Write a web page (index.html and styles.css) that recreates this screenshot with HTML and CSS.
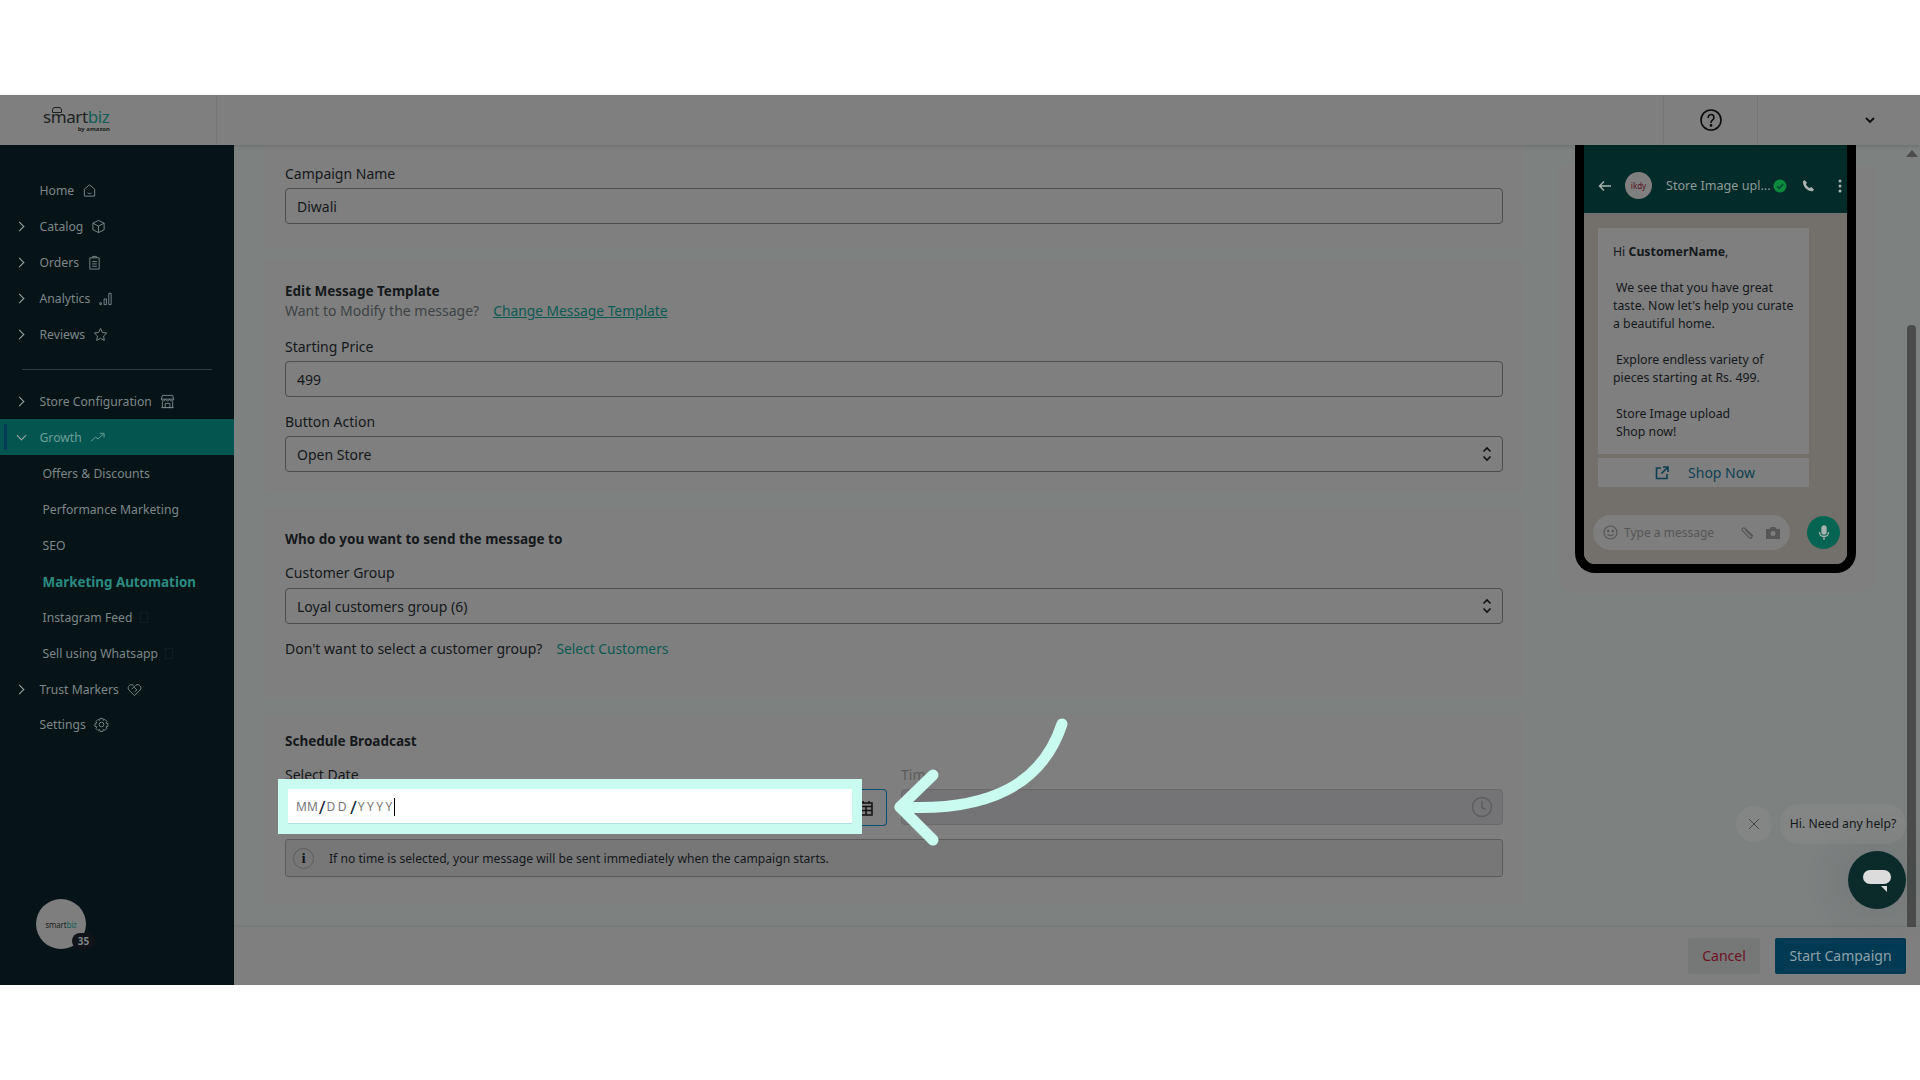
FILE: index.html
```html
<!DOCTYPE html>
<html>
<head lang="en">
    <meta charset="UTF-8">
    <title>Marketing Automation</title>
    <link rel="stylesheet" href="styles.css">
</head>
<body>
<div class="wrap">
    <header class="topbar">
        <div class="brand">
            <div class="logo"><span class="logo-mark"></span>smart<span class="logo-biz">biz</span><small>by amazon</small></div>
        </div>
        <div class="topbar-space"></div>
        <div class="topbar-help">
            <svg width="24" height="24" viewBox="0 0 24 24" fill="none" stroke="#0c0c0c" stroke-width="1.6"><circle cx="12" cy="12" r="10"/><path d="M9.2 9.4a2.9 2.9 0 1 1 4.5 2.4c-1.1.7-1.7 1.3-1.7 2.6" stroke-linecap="round"/><circle cx="12" cy="17.4" r=".6" fill="#0c0c0c"/></svg>
        </div>
        <div class="topbar-user">
            <svg width="12" height="8" viewBox="0 0 12 8" fill="none" stroke="#0c0c0c" stroke-width="1.8"><path d="M2 2l4 4 4-4"/></svg>
        </div>
    </header>

    <div class="main">
        <nav class="sidebar">
            <div class="nav-item"><span class="nav-text">Home</span>
                <svg class="nav-icon" viewBox="0 0 16 16"><path d="M2.500 6.500L8 2l5.500 4.500V14h-11zM6 10.500c1 1 3 1 4 0"/></svg></div>
            <div class="nav-item has-arrow"><span class="nav-text">Catalog</span>
                <svg class="nav-icon" viewBox="0 0 16 16"><path d="M8 1.500l6 3v7l-6 3-6-3v-7zM2 4.500l6 3 6-3M8 7.500v7"/></svg></div>
            <div class="nav-item has-arrow"><span class="nav-text">Orders</span>
                <svg class="nav-icon" viewBox="0 0 16 16"><path d="M3 3h10v12H3zM6 3V1.500h4V3M5.500 7h5M5.500 9.500h5M5.500 12h5"/></svg></div>
            <div class="nav-item has-arrow"><span class="nav-text">Analytics</span>
                <svg class="nav-icon" viewBox="0 0 16 16"><path d="M2 12.500h1.500v2H2zM6.500 8.500h2.500v6H6.500zM11.500 2.500H14v12h-2.500z"/></svg></div>
            <div class="nav-item has-arrow"><span class="nav-text">Reviews</span>
                <svg class="nav-icon" viewBox="0 0 16 16"><path d="M8 1.500l2 4.300 4.700.6-3.500 3.200.9 4.700L8 12l-4.100 2.300.9-4.700L1.300 6.400 6 5.800z"/></svg></div>
            <div class="nav-line"></div>
            <div class="nav-item has-arrow"><span class="nav-text">Store Configuration</span>
                <svg class="nav-icon" viewBox="0 0 16 16"><path d="M2.500 1.500h11l1 4h-13zM1.500 5.500c0 2.500 4 2.500 4.300 0 .3 2.500 4.100 2.500 4.400 0 .3 2.500 4.300 2.500 4.300 0M2.500 8v6.500h11V8M5.500 14.500V10h5v4.500M1.500 14.500h13"/></svg></div>
            <div class="nav-item has-arrow open active"><span class="nav-text">Growth</span>
                <svg class="nav-icon" viewBox="0 0 16 16"><path d="M1 12l5-4.500 2.500 2L14.500 4M10.500 3.500h4.500V8"/></svg></div>
            <div class="nav-sub">Offers &amp; Discounts</div>
            <div class="nav-sub">Performance Marketing</div>
            <div class="nav-sub">SEO</div>
            <div class="nav-sub current">Marketing Automation</div>
            <div class="nav-sub">Instagram Feed<i class="tofu"></i></div>
            <div class="nav-sub">Sell using Whatsapp<i class="tofu"></i></div>
            <div class="nav-item has-arrow"><span class="nav-text">Trust Markers</span>
                <svg class="nav-icon" viewBox="0 0 16 16"><path d="M8 14.500L2 8.500C-.5 5.500 3.500 1 6.500 3.500L8 5l1.500-1.500c3-2.500 7 2 4.500 5zM5 7.500l2.500-2 3 3-2.500 2"/></svg></div>
            <div class="nav-item nav-settings"><span class="nav-text">Settings</span>
                <svg class="nav-icon" viewBox="0 0 16 16"><circle cx="8" cy="8" r="2.500"/><path d="M6.500 1.500h3l.4 2 1.800-.9 2.100 2.100-1 1.800 2 .5v3l-2 .4.900 1.800-2.100 2.100-1.800-.9-.4 2h-3l-.4-2-1.800.9-2.100-2.100.9-1.800-2-.4v-3l2-.5-.9-1.800 2.100-2.100 1.800.9z"/></svg></div>

            <div class="avatar">
                <div class="avatar-logo">smart<span class="logo-biz">biz</span></div>
                <span class="avatar-badge">35</span>
            </div>
        </nav>

        <div class="content">
            <div class="scroll">
                <div class="form">
                    <section class="card card-name">
                        <div class="label">Campaign Name</div>
                        <div class="input">Diwali</div>
                    </section>

                    <section class="card card-template">
                        <div class="card-title">Edit Message Template</div>
                        <div class="hint">Want to Modify the message?<a class="link underlined">Change Message Template</a></div>
                        <div class="label">Starting Price</div>
                        <div class="input">499</div>
                        <div class="label">Button Action</div>
                        <div class="input select">Open Store
                            <svg class="updown" width="10" height="18" viewBox="0 0 10 18" fill="none" stroke="#111" stroke-width="1.600"><path d="M1.500 6.500L5 3l3.500 3.500M1.500 11.500L5 15l3.500-3.500"/></svg>
                        </div>
                    </section>

                    <section class="card card-group">
                        <div class="card-title">Who do you want to send the message to</div>
                        <div class="label">Customer Group</div>
                        <div class="input select">Loyal customers group (6)
                            <svg class="updown" width="10" height="18" viewBox="0 0 10 18" fill="none" stroke="#111" stroke-width="1.600"><path d="M1.500 6.500L5 3l3.500 3.500M1.500 11.500L5 15l3.500-3.500"/></svg>
                        </div>
                        <div class="customers-row">Don't want to select a customer group?<a class="link">Select Customers</a></div>
                    </section>

                    <section class="card card-schedule">
                        <div class="card-title">Schedule Broadcast</div>
                        <div class="date-grid">
                            <div>
                                <div class="label">Select Date</div>
                                <div class="date-input">
                                    <div class="date-field"><span class="date-mm">MM</span><b>/</b><span>DD</span><b>/</b><span>YYYY</span><span class="caret"></span></div>
                                    <div class="date-btn">
                                        <svg width="14" height="16" viewBox="0 0 14 16" fill="none" stroke="#111" stroke-width="1.500"><path d="M1 3h12v12H1zM1 6.500h12M1 10.500h12M7 6.500V15M4 1v2M10 1v2"/></svg>
                                    </div>
                                </div>
                            </div>
                            <div>
                                <div class="label label-off">Time</div>
                                <div class="input time-input">
                                    <svg width="22" height="22" viewBox="0 0 22 22" fill="none" stroke="#5d5d5d" stroke-width="1.500"><circle cx="11" cy="11" r="9.500"/><path d="M11 5v6.500l3.500 2"/></svg>
                                </div>
                            </div>
                        </div>
                        <div class="notice">
                            <span class="notice-icon">i</span>
                            If no time is selected, your message will be sent immediately when the campaign starts.
                        </div>
                    </section>
                </div>

                <aside class="preview">
                    <div class="phone">
                        <div class="phone-status"></div>
                        <div class="phone-head">
                            <svg width="14" height="12" viewBox="0 0 14 12" fill="none" stroke="#a9b3b1" stroke-width="1.400"><path d="M13 6H1.500M6 1.500L1.500 6 6 10.500"/></svg>
                            <div class="store-pic">ikdy</div>
                            <div class="store-name">Store Image upl...</div>
                            <svg width="14" height="14" viewBox="0 0 14 14"><circle cx="7" cy="7" r="6.500" fill="#0a8a3c"/><path d="M4 7.200l2.200 2.100L10 5" fill="none" stroke="#043" stroke-width="1.500"/></svg>
                            <svg class="head-call" width="13" height="13" viewBox="0 0 13 13"><path d="M2.500 1L5 3.800 3.900 5.200c.8 1.700 2.200 3 3.900 3.900L9.200 8l2.800 2.500-1.300 1.800C5.500 12.500.5 7.500 1 2.300z" fill="#a9b3b1"/></svg>
                            <svg class="head-more" width="4" height="14" viewBox="0 0 4 14" fill="#a9b3b1"><circle cx="2" cy="2" r="1.500"/><circle cx="2" cy="7" r="1.500"/><circle cx="2" cy="12" r="1.500"/></svg>
                        </div>
                        <div class="phone-chat">
                            <div class="bubble">
                                <p>Hi <strong>CustomerName</strong>,</p>
                                <p class="indent">We see that you have great taste. Now let's help you curate a beautiful home.</p>
                                <p class="indent">Explore endless variety of pieces starting at Rs. 499.</p>
                                <p class="indent">Store Image upload<br>Shop now!</p>
                            </div>
                            <div class="shop-btn">
                                <svg width="14" height="14" viewBox="0 0 14 14" fill="none" stroke="#0d3f52" stroke-width="1.600"><path d="M6 2H1.500v10.500H12V8M8 1h5v5M13 1L6.500 7.500"/></svg>
                                <span>Shop Now</span>
                            </div>
                            <div class="phone-bottom">
                                <div class="type-bar">
                                    <svg width="15" height="15" viewBox="0 0 15 15" fill="none" stroke="#565656" stroke-width="1.200"><circle cx="7.500" cy="7.500" r="6.500"/><circle cx="5.200" cy="6" r=".6"/><circle cx="9.800" cy="6" r=".6"/><path d="M4.500 9.300c1.500 1.700 4.500 1.700 6 0"/></svg>
                                    <span class="type-text">Type a message</span>
                                    <svg width="14" height="14" viewBox="0 0 14 14" fill="none" stroke="#565656" stroke-width="1.200"><path d="M13 10L5 2.500C3.500 1 1 3 2.500 4.700l6.800 7c1.500 1.500 3.500-.3 2.200-1.800L5.500 4"/></svg>
                                    <svg class="type-cam" width="14" height="13" viewBox="0 0 14 13"><path d="M0 3h3.500L5 1h4l1.500 2H14v10H0z" fill="#565656"/><circle cx="7" cy="7.500" r="2.500" fill="#7e7e7e"/></svg>
                                </div>
                                <div class="mic">
                                    <svg width="12" height="16" viewBox="0 0 12 16" fill="none" stroke="#a9b3b1" stroke-width="1.300"><rect x="4" y="1" width="4" height="8" rx="2" fill="#a9b3b1"/><path d="M1.500 7c0 6 9 6 9 0M6 12v3"/></svg>
                                </div>
                            </div>
                        </div>
                    </div>
                </aside>

                <div class="scrollbar">
                    <div class="scrollbar-up"></div>
                    <div class="scrollbar-thumb"></div>
                </div>
            </div>

            <footer class="actions">
                <a class="btn btn-cancel">Cancel</a>
                <a class="btn btn-start">Start Campaign</a>
            </footer>

            <div class="chat-widget">
                <div class="chat-row">
                    <span class="chat-close">
                        <svg width="12" height="12" viewBox="0 0 12 12" fill="none" stroke="#444" stroke-width="1"><path d="M1 1l10 10M11 1L1 11"/></svg>
                    </span>
                    <span class="chat-pill">Hi. Need any help?</span>
                </div>
                <div class="chat-fab">
                    <svg width="30" height="24" viewBox="0 0 30 24"><rect x="1" y="2" width="28" height="14" rx="7" fill="#dcdcdc"/><path d="M19 18h6v6z" fill="#dcdcdc"/></svg>
                </div>
            </div>
        </div>
    </div>

    <svg class="arrow" width="190" height="140" viewBox="0 0 190 140" fill="none" stroke="#c9fbf0" stroke-width="11" stroke-linecap="round" stroke-linejoin="round">
        <path d="M174 10C155 68 105 98 12 93"/>
        <path d="M45 61L12 93l33 33"/>
    </svg>
</div>
</body>
</html>
```

FILE: styles.css
```css
* {
    box-sizing: border-box;
}
body {
    margin: 0;
    background: white;
    font-family: "Noto Sans", "Liberation Sans", sans-serif;
    font-size: 14px;
    color: #14181b;
}
.wrap {
    position: relative;
    width: 1920px;
    height: 1080px;
    padding: 95px 0;
    overflow: hidden;
}

/* top bar */
.topbar {
    display: flex;
    height: 50px;
    background: #7f7f7f;
    box-shadow: 0 1px 4px rgba(0, 0, 0, .15);
    position: relative;
    z-index: 2;
}
.brand {
    width: 217px;
    padding: 12px 0 0 43px;
    border-right: 1px solid #767676;
}
.logo {
    position: relative;
    width: 67px;
    font-size: 17px;
    line-height: 19px;
    letter-spacing: -.4px;
    color: #1d1f21;
}
.logo small {
    display: block;
    font-size: 6px;
    font-weight: 700;
    line-height: 6px;
    text-align: right;
    letter-spacing: 0;
}
.logo-mark {
    position: absolute;
    left: 9px;
    top: 0;
    width: 10px;
    height: 6px;
    border: 1px solid #1d1f21;
    border-radius: 3px 3px 0 0;
}
.logo-biz {
    color: #0f5e58;
}
.topbar-space {
    flex: 1;
}
.topbar-help {
    display: flex;
    align-items: center;
    justify-content: center;
    width: 95px;
    border-left: 1px solid #767676;
    border-right: 1px solid #767676;
}
.topbar-user {
    display: flex;
    align-items: center;
    justify-content: flex-end;
    width: 162px;
    padding-right: 44px;
}

.main {
    display: flex;
    height: 840px;
}

/* sidebar */
.sidebar {
    position: relative;
    width: 234px;
    padding-top: 27px;
    background: #061418;
    color: #7d8789;
    font-size: 12.200px;
}
.nav-item {
    position: relative;
    display: flex;
    align-items: center;
    height: 36px;
    padding-left: 39.500px;
}
.nav-item.has-arrow:before {
    content: "";
    position: absolute;
    left: 16px;
    top: 15px;
    width: 6px;
    height: 6px;
    border-top: 1.500px solid #a2a8a8;
    border-right: 1.500px solid #a2a8a8;
    transform: rotate(45deg);
}
.nav-item.open:before {
    left: 18px;
    top: 13px;
    transform: rotate(135deg);
}
.nav-icon {
    width: 15px;
    height: 15px;
    margin-left: 8px;
    fill: none;
    stroke: #7d8789;
    stroke-width: 1;
}
.nav-line {
    height: 1px;
    margin: 17px 22px 13px;
    background: #323c3e;
}
.nav-item.active {
    background: #02564f;
    color: #6d9d97;
}
.nav-item.active:after {
    content: "";
    position: absolute;
    left: 4px;
    top: 5px;
    width: 3px;
    height: 26px;
    background: #043a55;
}
.nav-item.active .nav-icon {
    stroke: #6d9d97;
}
.nav-sub {
    display: flex;
    align-items: center;
    height: 36px;
    padding-left: 42.500px;
}
.nav-sub.current {
    padding-top: 1px;
    color: #2a8a80;
    font-size: 13.400px;
    font-weight: 700;
}
.tofu {
    width: 8px;
    height: 11px;
    margin-left: 7px;
    border: 1px solid #0e1d20;
}
.nav-settings {
    margin-top: -1px;
}
.avatar {
    position: absolute;
    left: 36px;
    top: 754px;
    display: flex;
    align-items: center;
    justify-content: center;
    width: 50px;
    height: 50px;
    border-radius: 50%;
    background: #7e7e7e;
}
.avatar-logo {
    font-size: 8px;
    letter-spacing: -.2px;
    color: #1d1f21;
}
.avatar-badge {
    position: absolute;
    right: -9px;
    bottom: 0;
    width: 23px;
    height: 16px;
    border-radius: 8px;
    background: #101418;
    color: #7f8486;
    font-size: 10px;
    font-weight: 700;
    line-height: 16px;
    text-align: center;
}

/* content */
.content {
    position: relative;
    flex: 1;
    display: flex;
    flex-direction: column;
    background: #7f7f7f;
}
.scroll {
    display: flex;
    flex: 1;
    height: 782px;
    background: #7d8180;
    overflow: hidden;
}
.form {
    width: 1289px;
    padding-left: 31px;
    flex-shrink: 0;
}
.card {
    padding: 0 20px;
    background: #7f7f7f;
}
.card-name {
    height: 102px;
    padding-top: 19px;
    margin-bottom: 13px;
}
.card-template {
    height: 233px;
    padding-top: 21px;
    margin-bottom: 15px;
}
.card-template .label {
    margin-top: 16px;
}
.card-template .input + .label {
    margin-top: 15px;
}
.card-group {
    height: 190px;
    padding-top: 21px;
    margin-bottom: 16px;
}
.card-group .label {
    margin-top: 14px;
    margin-bottom: 5px;
}
.card-schedule {
    height: 191px;
    padding-top: 17px;
}
.label {
    height: 20px;
    margin-bottom: 4px;
    line-height: 20px;
}
.label-off {
    color: #5c5c5c;
}
.card-title {
    height: 20px;
    font-size: 13.500px;
    font-weight: 700;
    line-height: 20px;
}
.hint {
    height: 20px;
    color: #3d4345;
    line-height: 20px;
}
.link {
    margin-left: 14px;
    color: #0a5a52;
    font-size: 13.800px;
}
.underlined {
    text-decoration: underline;
}
.input {
    position: relative;
    display: flex;
    align-items: center;
    height: 36px;
    padding: 0 11px;
    border: 1px solid #4d4d4d;
    border-radius: 4px;
}
.updown {
    position: absolute;
    right: 10px;
    top: 8px;
}
.customers-row {
    height: 20px;
    margin-top: 15px;
    line-height: 20px;
}

/* date row */
.date-grid {
    display: grid;
    grid-template-columns: 602px 602px;
    gap: 14px;
    margin-top: 14px;
}
.date-input {
    display: flex;
    height: 37px;
}
.date-field {
    position: relative;
    z-index: 1;
    display: flex;
    align-items: center;
    width: 564px;
    height: 35px;
    margin: 0 0 0 3px;
    padding: 1px 0 0 8px;
    background: white;
    border-bottom: 1px solid #b0e0e8;
    box-shadow: 0 0 0 10px #c9fbf0;
    color: #777;
    font-size: 12px;
    letter-spacing: 2.500px;
}
.date-mm {
    letter-spacing: 0;
}
.date-field b {
    margin: 0 1px 0 1px;
    color: #102030;
    font-size: 18px;
    font-weight: 400;
    letter-spacing: 0;
}
.caret {
    width: 1px;
    height: 18px;
    margin-left: -1px;
    background: black;
}
.date-btn {
    display: flex;
    align-items: center;
    justify-content: flex-end;
    flex: 1;
    padding-right: 13px;
    border: 1px solid #03506f;
    border-left: 0;
    border-radius: 0 4px 4px 0;
}
.time-input {
    justify-content: flex-end;
    margin-top: 1px;
    padding: 0 9px;
    background: #747476;
    border-color: #6a6a6a;
}
.notice {
    display: flex;
    align-items: center;
    height: 38px;
    margin-top: 13px;
    padding-left: 7px;
    background: #777778;
    border: 1px solid #5c5c5c;
    border-radius: 3px;
    font-size: 12.150px;
}
.notice-icon {
    width: 21px;
    height: 21px;
    margin-right: 15px;
    border: 1px solid #5c5c5c;
    border-radius: 50%;
    font-family: "Liberation Serif", serif;
    font-size: 15px;
    font-weight: 700;
    line-height: 19px;
    text-align: center;
}

/* whatsapp preview */
.preview {
    width: 382px;
    padding-left: 35px;
    flex-shrink: 0;
}
.phone {
    width: 281px;
    height: 428px;
    margin-left: 17px;
    display: flex;
    flex-direction: column;
    border: solid black;
    border-width: 0 9px 9px;
    border-radius: 0 0 20px 20px;
    overflow: hidden;
    box-shadow: -17px 21px 0 0 #7f7f7f, 20px 21px 0 0 #7f7f7f;
}
.phone-status {
    height: 13px;
    background: #022a28;
}
.phone-head {
    display: flex;
    align-items: center;
    height: 55px;
    padding-left: 14px;
    background: #032b2a;
    color: #8d9998;
    font-size: 12.600px;
}
.store-pic {
    width: 27px;
    height: 27px;
    margin: 0 14px 0 13px;
    border-radius: 50%;
    background: #7f7f7f;
    color: #5a1020;
    font-size: 8px;
    line-height: 27px;
    text-align: center;
}
.store-name {
    width: 107px;
    white-space: nowrap;
}
.head-call {
    margin-left: 15px;
}
.head-more {
    margin-left: 23px;
}
.phone-chat {
    flex: 1;
    padding: 15px 0 0 14px;
    background: #736f6a;
}
.bubble {
    width: 211px;
    height: 226px;
    padding: 15px 8px 0 15px;
    background: #7f7f7f;
    font-size: 12.300px;
    line-height: 18px;
}
.bubble p {
    margin: 0 0 18px;
}
.bubble .indent {
    text-indent: 3px;
}
.bubble p:last-child {
    padding-left: 3px;
    text-indent: 0;
}
.shop-btn {
    display: flex;
    align-items: center;
    justify-content: center;
    gap: 19px;
    width: 211px;
    height: 29px;
    margin-top: 4px;
    padding-left: 3px;
    background: #7f7f7f;
    color: #0d3f52;
}
.phone-bottom {
    display: flex;
    align-items: center;
    margin: 28px 0 0 -5px;
}
.type-bar {
    display: flex;
    align-items: center;
    width: 197px;
    height: 35px;
    padding-left: 10px;
    border-radius: 18px;
    background: #7e7e7e;
    color: #565656;
    font-size: 12px;
}
.type-text {
    width: 122px;
    padding-left: 6px;
    flex-shrink: 0;
}
.type-cam {
    margin-left: 12px;
}
.mic {
    display: flex;
    align-items: center;
    justify-content: center;
    width: 33px;
    height: 33px;
    margin-left: 17px;
    border-radius: 50%;
    background: #056552;
}
.scrollbar {
    flex: 1;
    position: relative;
}
.scrollbar-up {
    width: 0;
    margin: 5px 0 0 1px;
    border: 6px solid transparent;
    border-top: 0;
    border-bottom: 7px solid #4d4d4d;
}
.scrollbar-thumb {
    width: 9px;
    height: 605px;
    margin: 168px 0 0 2px;
    border-radius: 4px;
    background: #4c4c4c;
}

/* footer */
.actions {
    display: flex;
    justify-content: flex-end;
    align-items: center;
    gap: 15px;
    height: 58px;
    padding-right: 14px;
    background: #7f7f7f;
    box-shadow: 0 -1px 3px rgba(0, 0, 0, .08);
    position: relative;
}
.btn {
    height: 36px;
    padding: 0 12px;
    border-radius: 2px;
    line-height: 36px;
}
.btn-cancel {
    width: 72px;
    background: #767877;
    color: #6f1024;
    text-align: center;
}
.btn-start {
    width: 131px;
    background: #013a52;
    color: #8da2ab;
    text-align: center;
    white-space: nowrap;
}

/* chat widget, sits over the page */
.chat-widget {
    position: absolute;
    right: 14px;
    top: 659px;
    display: flex;
    flex-direction: column;
    align-items: flex-end;
}
.chat-row {
    display: flex;
    align-items: center;
    gap: 8px;
}
.chat-close {
    display: flex;
    align-items: center;
    justify-content: center;
    width: 36px;
    height: 36px;
    border-radius: 50%;
    background: #848685;
}
.chat-pill {
    width: 126px;
    height: 40px;
    border-radius: 20px;
    background: #848685;
    font-size: 12.200px;
    line-height: 40px;
    text-align: center;
}
.chat-fab {
    display: flex;
    align-items: center;
    justify-content: center;
    width: 58px;
    height: 58px;
    margin-top: 7px;
    border-radius: 50%;
    background: #0b2a2a;
    box-shadow: 0 0 50px rgba(10, 40, 40, .14);
}

/* pointer over the date input */
.arrow {
    position: absolute;
    left: 888px;
    top: 714px;
    z-index: 3;
}
```
